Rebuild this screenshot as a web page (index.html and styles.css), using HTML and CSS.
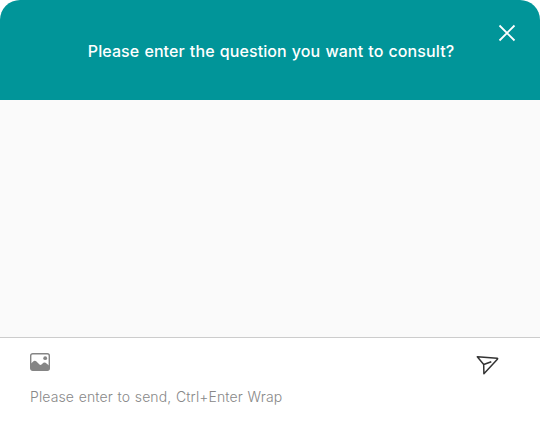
FILE: index.html
```html
<!DOCTYPE html>
<html lang="en">
<head>
  <meta charset="UTF-8">
  <meta name="viewport" content="width=device-width, initial-scale=1.0">
  <title>Consult</title>
  <link rel="stylesheet" href="styles.css">
</head>
<body>
  <div class="chat">
    <header class="chat-header">
      <h1>Please enter the question you want to consult?</h1>
      <button class="close-btn" aria-label="Close">
        <svg width="18" height="18" viewBox="0 0 18 18">
          <path d="M1.5 1.5 16.5 16.5M16.5 1.5 1.5 16.5" fill="none" stroke="#fff" stroke-width="1.8"/>
        </svg>
      </button>
    </header>

    <main class="messages"></main>

    <footer class="composer">
      <div class="toolbar">
        <button class="image-btn" aria-label="Add image">
          <svg width="20" height="18" viewBox="0 0 20 18">
            <rect x="0.7" y="0.7" width="18.6" height="16.6" rx="2" fill="none" stroke="#858585" stroke-width="1.4"/>
            <path d="M1 10.500 3.800 8Q5 7.200 6.200 8.200L9.500 11.600Q10.500 12.400 11.500 11.500L13.400 9.800Q14.500 9 15.600 9.800L19 12.500V17H1Z" fill="#858585"/>
            <circle cx="15.200" cy="5.200" r="1.900" fill="#858585"/>
          </svg>
        </button>
        <button class="send-btn" aria-label="Send">
          <svg width="24" height="22" viewBox="0 0 24 22">
            <path d="M1.300 3.800 21.100 5.200Q22 5.300 21.400 6.200L7.900 20.700 7.700 11.500Z M7.700 11.500 15.300 8.700" fill="none" stroke="#333" stroke-width="1.500" stroke-linejoin="round"/>
          </svg>
        </button>
      </div>
      <input type="text" class="message-input" placeholder="Please enter to send, Ctrl+Enter Wrap">
    </footer>
  </div>
</body>
</html>
```

FILE: styles.css
```css
* {
  box-sizing: border-box;
  margin: 0;
  padding: 0;
}

body {
  font-family: Inter, "Liberation Sans", sans-serif;
  background-color: #fff;
}

button {
  border: none;
  background: none;
  cursor: pointer;
}

svg {
  display: block;
}

.chat {
  display: flex;
  flex-direction: column;
  height: 100vh;
}

.chat-header {
  position: relative;
  height: 100px;
  padding: 2px 0 0 2px;
  display: flex;
  align-items: center;
  justify-content: center;
  background-color: #019599;
  border-radius: 20px 20px 0 0;
}

.chat-header h1 {
  color: #fff;
  font-size: 16px;
  font-weight: 500;
  letter-spacing: 0.1px;
  word-spacing: 0.7px;
}

.close-btn {
  position: absolute;
  top: 24px;
  right: 24px;
}

.messages {
  flex: 1;
  background-color: #fafafa;
}

.composer {
  height: 95px;
  padding: 15px 40px 0 30px;
  border-top: 1px solid #ccc;
}

.toolbar {
  display: flex;
  justify-content: space-between;
  align-items: flex-start;
  height: 31px;
}

.message-input {
  display: block;
  width: 100%;
  height: 24px;
  border: none;
  outline: none;
  font: 300 14px Inter, "Liberation Sans", sans-serif;
  letter-spacing: 0.12px;
  word-spacing: 0.6px;
}

.message-input::placeholder {
  color: #888;
}
```
